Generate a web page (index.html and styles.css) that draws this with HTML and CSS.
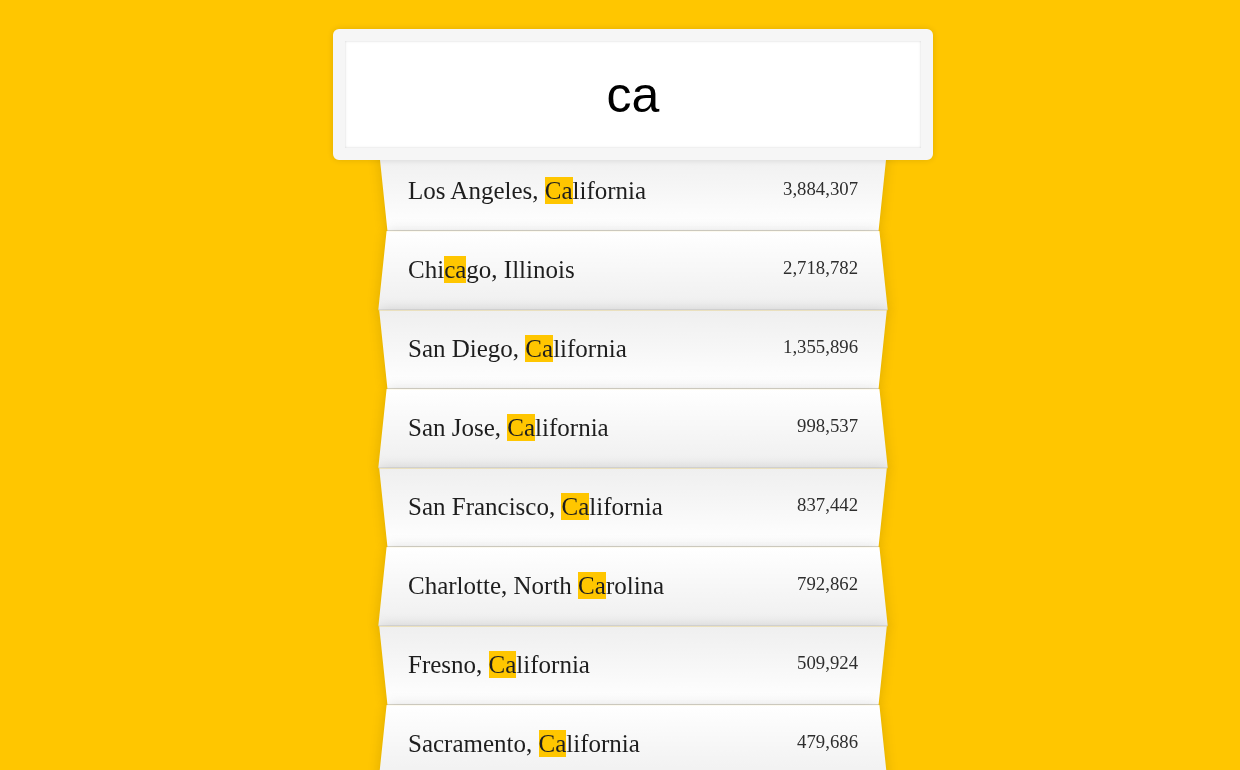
FILE: index.html
```html
<!DOCTYPE html>
<html lang="en">
<head>
<meta charset="utf-8">
<title>Type Ahead</title>
<link rel="stylesheet" href="styles.css">
</head>
<body>
<form class="search-form">
  <input type="text" class="search" value="ca" placeholder="City or State">
  <ul class="suggestions">
    <li><span class="name">Los Angeles, <span class="hl">Ca</span>lifornia</span><span class="population">3,884,307</span></li>
    <li><span class="name">Chi<span class="hl">ca</span>go, Illinois</span><span class="population">2,718,782</span></li>
    <li><span class="name">San Diego, <span class="hl">Ca</span>lifornia</span><span class="population">1,355,896</span></li>
    <li><span class="name">San Jose, <span class="hl">Ca</span>lifornia</span><span class="population">998,537</span></li>
    <li><span class="name">San Francisco, <span class="hl">Ca</span>lifornia</span><span class="population">837,442</span></li>
    <li><span class="name">Charlotte, North <span class="hl">Ca</span>rolina</span><span class="population">792,862</span></li>
    <li><span class="name">Fresno, <span class="hl">Ca</span>lifornia</span><span class="population">509,924</span></li>
    <li><span class="name">Sacramento, <span class="hl">Ca</span>lifornia</span><span class="population">479,686</span></li>
  </ul>
</form>
</body>
</html>
```
FILE: styles.css
```css
html {
  box-sizing: border-box;
  background: #ffc600;
}

*, *::before, *::after {
  box-sizing: inherit;
}

body {
  margin: 0;
  padding-left: 26px;
  height: 770px;
  overflow: hidden;
  font-family: "Liberation Serif", "Times New Roman", serif;
  font-size: 25px;
  color: #1e1e1e;
}

.search-form {
  width: 500px;
  margin: 16.5px auto 0;
}

.search {
  display: block;
  width: 600px;
  height: 131px;
  margin: 0 0 0 -50px;
  padding: 0 25px;
  position: relative;
  top: 12.5px;
  z-index: 2;
  text-align: center;
  outline: 0;
  border: 12px solid #f6f6f6;
  border-radius: 6px;
  background: #fff;
  font-family: "Liberation Sans", Arial, sans-serif;
  font-size: 50px;
  color: #000;
  box-shadow: 0 0 6px rgba(0, 0, 0, 0.12), inset 0 0 2.5px rgba(0, 0, 0, 0.19);
}

.suggestions {
  margin: 1px 0 0;
  padding: 0;
  position: relative;
}

.suggestions li {
  list-style: none;
  position: relative;
  isolation: isolate;
  display: flex;
  justify-content: space-between;
  margin: 0;
  padding: 28.5px 25px 22.75px;
  line-height: 27.75px;
}

.suggestions li::before {
  content: "";
  position: absolute;
  inset: 0;
  z-index: -1;
  border-bottom: 1.25px solid #d8d8d8;
  box-shadow: 0 0 12.5px rgba(0, 0, 0, 0.14);
}

.suggestions li:nth-child(even)::before {
  transform: perspective(125px) rotateX(3deg) translateY(2.5px) scale(1.001);
  background: linear-gradient(to bottom, #ffffff 0%, #efefef 100%);
}

.suggestions li:nth-child(odd)::before {
  transform: perspective(125px) rotateX(-3deg) translateY(3.75px);
  background: linear-gradient(to top, #ffffff 0%, #efefef 100%);
}

.population {
  font-size: 18.75px;
  line-height: 23.5px;
  color: #2e2e2e;
}

.hl {
  background: #ffc600;
}
```
